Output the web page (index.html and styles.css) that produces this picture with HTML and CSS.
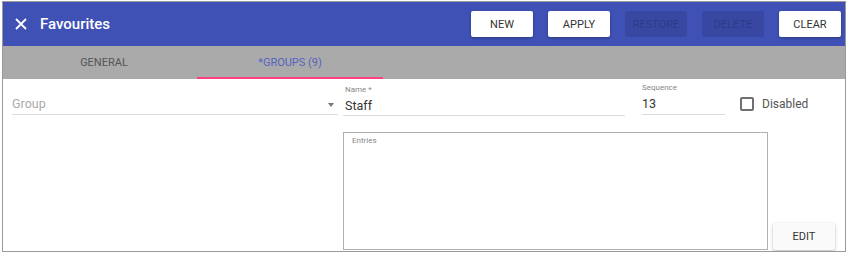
FILE: index.html
```html
<html lang="en">
  <head>
    <meta name="viewport" content="width=device-width,initial-scale=1">
    <title>Favourites</title>
    <link rel="stylesheet" href="styles.css">
  </head>
<body>
  <div class="frame">
    <div class="toolbar">
      <svg class="close" width="12" height="12" viewBox="0 0 12 12">
        <path d="M1 1L11 11M11 1L1 11" stroke="#fff" stroke-width="1.8" fill="none"/>
      </svg>
      <div class="title">Favourites</div>
      <div class="actions">
        <button class="btn">NEW</button>
        <button class="btn">APPLY</button>
        <button class="btn disabled">RESTORE</button>
        <button class="btn disabled">DELETE</button>
        <button class="btn">CLEAR</button>
      </div>
    </div>
    <div class="tabs">
      <div class="tab">GENERAL</div>
      <div class="tab active">*GROUPS (9)</div>
    </div>
    <div class="content">
      <div class="row">
        <div class="field group-field">
          <div class="value placeholder">Group</div>
          <span class="arrow"></span>
        </div>
        <div class="field name-field">
          <div class="label">Name *</div>
          <div class="value">Staff</div>
        </div>
        <div class="field seq-field">
          <div class="label">Sequence</div>
          <div class="value">13</div>
        </div>
        <label class="check">
          <span class="box"></span>
          <span>Disabled</span>
        </label>
      </div>
      <div class="row lower">
        <div class="spacer"></div>
        <div class="entries">
          <div class="label">Entries</div>
        </div>
        <button class="btn edit">EDIT</button>
      </div>
    </div>
  </div>
</body>
</html>
```
FILE: styles.css
```css
html, body {
  padding: 0;
  margin: 0;
  font-family: Roboto, "Liberation Sans", sans-serif;
  background: #fff;
}
.frame {
  margin: 1px 0 0 2px;
  width: 844px;
  height: 251px;
  box-sizing: border-box;
  border: 1px solid #9a9a9a;
  display: flex;
  flex-direction: column;
  overflow: hidden;
}
.toolbar {
  flex-shrink: 0;
  height: 44px;
  background: #3f51b5;
  display: flex;
  align-items: center;
  padding: 0 4px 0 12px;
  color: #fff;
}
.close {
  margin-right: 13px;
}
.title {
  font-size: 15px;
  font-weight: 500;
  flex: 1;
}
.actions {
  display: flex;
  gap: 15px;
}
.btn {
  width: 62px;
  height: 26px;
  border: none;
  border-radius: 2px;
  background: #fff;
  color: #333;
  font-family: Roboto, "Liberation Sans", sans-serif;
  font-size: 11px;
  font-weight: 400;
  padding: 0;
  box-shadow: 0 1px 3px rgba(0,0,0,0.3);
}
.btn.disabled {
  background: rgba(0,0,0,0.1);
  color: rgba(0,0,0,0.2);
  box-shadow: none;
}
.tabs {
  flex-shrink: 0;
  height: 33px;
  background: #aaaaaa;
  display: flex;
  padding-left: 8px;
}
.tab {
  width: 186px;
  display: flex;
  align-items: center;
  justify-content: center;
  font-size: 11px;
  color: #555;
  box-sizing: border-box;
  border-bottom: 2px solid transparent;
  padding-top: 2px;
}
.tab.active {
  color: #5563c1;
  border-bottom-color: #ff4081;
}
.content {
  flex: 1;
  display: flex;
  flex-direction: column;
  padding: 4px 0 0 9px;
}
.row {
  display: flex;
  align-items: flex-start;
}
.field {
  border-bottom: 1px solid #dcdcdc;
  position: relative;
}
.label {
  font-size: 8px;
  line-height: 10px;
  color: #888;
}
.value {
  font-size: 12.5px;
  line-height: 16px;
  color: #333;
  margin-top: 3px;
  padding-bottom: 2px;
}
.group-field {
  width: 326px;
  margin-top: 13px;
}
.placeholder {
  color: #aaa;
  margin-top: 0;
}
.arrow {
  position: absolute;
  right: 4px;
  top: 7px;
  border-left: 3px solid transparent;
  border-right: 3px solid transparent;
  border-top: 4px solid #777;
}
.name-field {
  width: 282px;
  margin-left: 5px;
  margin-top: 2px;
}
.name-field .label {
  padding-left: 2px;
}
.name-field .value {
  padding-left: 2px;
  padding-bottom: 1px;
}
.seq-field {
  width: 83px;
  margin-left: 17px;
}
.check {
  display: flex;
  align-items: center;
  margin: 14px 0 0 15px;
  font-size: 12px;
  color: #555;
}
.box {
  width: 10px;
  height: 10px;
  border: 2px solid #6f6f6f;
  border-radius: 2px;
  margin-right: 8px;
}
.lower {
  margin-top: 16px;
  align-items: flex-end;
}
.spacer {
  width: 331px;
}
.entries {
  width: 425px;
  height: 118px;
  box-sizing: border-box;
  border: 1px solid #b0b0b0;
  padding: 3px 8px;
}
.btn.edit {
  margin-left: 5px;
  height: 27px;
  background: #fafafa;
  color: #333;
}
```
